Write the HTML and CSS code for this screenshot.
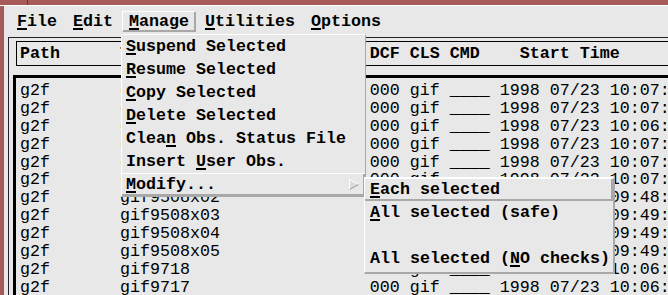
FILE: index.html
```html
<!DOCTYPE html>
<html>
<head>
<meta charset="utf-8">
<link rel="stylesheet" href="styles.css">
</head>
<body>
<div class="window">
  <div class="frame-top"></div>
  <div class="main">
    <div class="frame-left"></div>
    <div class="content">
      <div class="menubar">
        <div class="mb-item"><u>F</u>ile</div>
        <div class="mb-item"><u>E</u>dit</div>
        <div class="mb-item active"><u>M</u>anage</div>
        <div class="mb-item"><u>U</u>tilities</div>
        <div class="mb-item"><u>O</u>ptions</div>
      </div>
      <div class="panel">
        <div class="header"><span class="c c-path">Path</span><span class="c c-name">Target</span><span class="c c-dcf">DCF</span><span class="c c-cls">CLS</span><span class="c c-hcmd">CMD</span><span>Start Time</span></div>
        <div class="list">
          <div class="row"><span class="c c-path">g2f</span><span class="c c-name">gif9506x01</span><span class="c c-dcf">000</span><span class="c c-cls">gif</span><span class="c c-cmd">____</span><span>1998 07/23 10:07:12</span></div>
          <div class="row"><span class="c c-path">g2f</span><span class="c c-name">gif9506x02</span><span class="c c-dcf">000</span><span class="c c-cls">gif</span><span class="c c-cmd">____</span><span>1998 07/23 10:07:15</span></div>
          <div class="row"><span class="c c-path">g2f</span><span class="c c-name">gif9506x03</span><span class="c c-dcf">000</span><span class="c c-cls">gif</span><span class="c c-cmd">____</span><span>1998 07/23 10:06:48</span></div>
          <div class="row"><span class="c c-path">g2f</span><span class="c c-name">gif9506x04</span><span class="c c-dcf">000</span><span class="c c-cls">gif</span><span class="c c-cmd">____</span><span>1998 07/23 10:07:02</span></div>
          <div class="row"><span class="c c-path">g2f</span><span class="c c-name">gif9506x05</span><span class="c c-dcf">000</span><span class="c c-cls">gif</span><span class="c c-cmd">____</span><span>1998 07/23 10:07:05</span></div>
          <div class="row"><span class="c c-path">g2f</span><span class="c c-name">gif9508x01</span><span class="c c-dcf">000</span><span class="c c-cls">gif</span><span class="c c-cmd">____</span><span>1998 07/23 10:07:09</span></div>
          <div class="row"><span class="c c-path">g2f</span><span class="c c-name">gif9508x02</span><span class="c c-dcf">000</span><span class="c c-cls">gif</span><span class="c c-cmd">____</span><span>1998 07/23 09:48:31</span></div>
          <div class="row"><span class="c c-path">g2f</span><span class="c c-name">gif9508x03</span><span class="c c-dcf">000</span><span class="c c-cls">gif</span><span class="c c-cmd">____</span><span>1998 07/23 09:49:02</span></div>
          <div class="row"><span class="c c-path">g2f</span><span class="c c-name">gif9508x04</span><span class="c c-dcf">000</span><span class="c c-cls">gif</span><span class="c c-cmd">____</span><span>1998 07/23 09:49:10</span></div>
          <div class="row"><span class="c c-path">g2f</span><span class="c c-name">gif9508x05</span><span class="c c-dcf">000</span><span class="c c-cls">gif</span><span class="c c-cmd">____</span><span>1998 07/23 09:49:18</span></div>
          <div class="row"><span class="c c-path">g2f</span><span class="c c-name">gif9718</span><span class="c c-dcf">000</span><span class="c c-cls">gif</span><span class="c c-cmd">____</span><span>1998 07/23 10:06:22</span></div>
          <div class="row"><span class="c c-path">g2f</span><span class="c c-name">gif9717</span><span class="c c-dcf">000</span><span class="c c-cls">gif</span><span class="c c-cmd">____</span><span>1998 07/23 10:06:27</span></div>
        </div>
      </div>
    </div>
  </div>

  <div class="menu manage-menu">
    <div class="mi"><u>S</u>uspend Selected</div>
    <div class="mi"><u>R</u>esume Selected</div>
    <div class="mi"><u>C</u>opy Selected</div>
    <div class="mi"><u>D</u>elete Selected</div>
    <div class="mi">Clea<u>n</u> Obs. Status File</div>
    <div class="mi">Insert <u>U</u>ser Obs.</div>
    <div class="mi raised cascade"><span><u>M</u>odify...</span>
      <svg class="arrow" width="10" height="11" viewBox="0 0 10 11"><polygon points="0.5,0.5 9.5,5.5 0.5,10.5" fill="#dcdcdc"/><line x1="0.5" y1="0.5" x2="0.5" y2="10.5" stroke="#ffffff"/><line x1="0.5" y1="0.5" x2="9.5" y2="5.5" stroke="#ffffff"/><line x1="0.5" y1="10.5" x2="9.5" y2="5.5" stroke="#9a9a9a"/></svg>
    </div>
  </div>

  <div class="menu submenu">
    <div class="mi raised"><u>E</u>ach selected</div>
    <div class="mi"><u>A</u>ll selected (safe)</div>
    <div class="mi"></div>
    <div class="mi">All selected (<u>N</u>O checks)</div>
  </div>
</div>
</body>
</html>
```
FILE: styles.css
```css
html, body {
  margin: 0;
  padding: 0;
  overflow: hidden;
  background: #e8e8e8;
}

.window {
  position: relative;
  width: 668px;
  height: 295px;
  overflow: hidden;
  background: #e8e8e8;
  color: #000;
  font-family: "Liberation Mono", "Courier New", monospace;
  font-size: 16.67px;
}

u {
  text-decoration: underline;
  text-decoration-thickness: 2px;
  text-underline-offset: 2px;
}

.frame-top {
  height: 5px;
  background: linear-gradient(to right, #a65a5a 27px, #6e3434 27px 28px, #a65a5a 28px);
  border-bottom: 1px solid #ffffff;
}

.main {
  display: flex;
  height: 289px;
}

.frame-left {
  flex: none;
  width: 3px;
  background: #a65a5a;
  border-right: 1px solid #6a6a6a;
}

.content {
  flex: 1;
  min-width: 0;
}

.menubar {
  display: flex;
  height: 31px;
  box-sizing: border-box;
  padding: 5px 0 0 5px;
  font-weight: bold;
  align-items: flex-start;
}

.mb-item {
  margin: 0 1px;
  padding: 0 6px;
  border: 1px solid transparent;
  line-height: 19px;
  white-space: pre;
}

.mb-item.active {
  border-color: #ffffff #a8a8a8 #a8a8a8 #ffffff;
  box-shadow: inset -1px -1px 0 #a8a8a8;
}

.panel {
  margin-left: 4px;
  border-top: 1px solid #222;
  border-left: 1px solid #222;
  padding: 3px 0 0 7px;
  width: 900px;
}

.header {
  border: 1px solid #000;
  border-right: none;
  line-height: 23px;
  height: 23px;
  padding-left: 3px;
  font-weight: bold;
  white-space: pre;
}

.list {
  margin: 9px 0 0 -3px;
  border-top: 3px solid #000;
  border-left: 3px solid #000;
  padding: 4px 0 0 4px;
}

.row {
  height: 17.9px;
  line-height: 17.9px;
  white-space: pre;
}

.c {
  display: inline-block;
}

.c-path { width: 10ch; }
.c-name { width: 25ch; }
.c-dcf { width: 4ch; }
.c-cls { width: 4ch; }
.c-cmd { width: 5ch; }
.c-hcmd { width: 7ch; }

.menu {
  position: absolute;
  background: #e8e8e8;
  border: 1px solid;
  border-color: #ffffff #a8a8a8 #a8a8a8 #ffffff;
  font-weight: bold;
}

.manage-menu {
  left: 121px;
  top: 34px;
  width: 243px;
}

.mi {
  height: 23px;
  line-height: 23px;
  padding-left: 4px;
  white-space: pre;
}

.mi.raised {
  box-shadow: inset 0 1px 0 #ffffff, inset -2px -2px 0 #a8a8a8;
}

.mi.cascade {
  display: flex;
  justify-content: space-between;
  align-items: center;
  padding-right: 6px;
}

.arrow {
  display: block;
  margin-top: -1px;
}

.submenu {
  left: 364px;
  top: 177px;
  width: 248px;
  border-right-width: 2px;
  border-bottom-width: 2px;
  padding-bottom: 2px;
}

.submenu .mi {
  padding-left: 5px;
}
```
